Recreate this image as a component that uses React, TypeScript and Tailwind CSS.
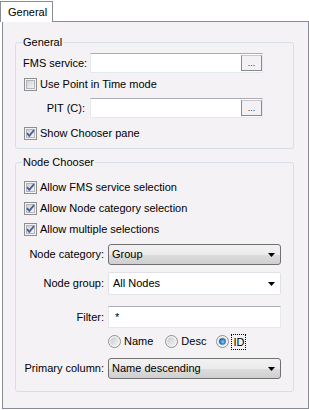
import React from "react";

function CheckBox({ checked }: { checked?: boolean }) {
  return (
    <svg width="13" height="13" viewBox="0 0 13 13" className="shrink-0">
      <defs>
        <linearGradient id="cbfill" x1="0" y1="0" x2="1" y2="1">
          <stop offset="0" stopColor="#cbcfd5" />
          <stop offset="1" stopColor="#f7f7f7" />
        </linearGradient>
      </defs>
      <rect x="0.5" y="0.5" width="12" height="12" fill="#f4f4f4" stroke="#8e8f8f" />
      <rect x="2.5" y="2.5" width="8" height="8" fill="url(#cbfill)" stroke="#b1b5bb" />
      {checked && (
        <path d="M3 6.2 L5.3 8.8 L10 3.2" fill="none" stroke="#4a5f97" strokeWidth="1.8" />
      )}
    </svg>
  );
}

function Radio({ checked }: { checked?: boolean }) {
  return (
    <svg width="13" height="13" viewBox="0 0 13 13" className="shrink-0">
      <defs>
        <linearGradient id="rdfill" x1="0" y1="0" x2="1" y2="1">
          <stop offset="0" stopColor="#c6cad0" />
          <stop offset="1" stopColor="#f4f4f4" />
        </linearGradient>
        <radialGradient id="rddot" cx="0.55" cy="0.55" r="0.6">
          <stop offset="0" stopColor="#8fd3ff" />
          <stop offset="0.6" stopColor="#2a7fc9" />
          <stop offset="1" stopColor="#0d3f74" />
        </radialGradient>
      </defs>
      <circle cx="6.5" cy="6.5" r="6" fill="#f4f4f4" stroke="#8e8f8f" />
      <circle cx="6.5" cy="6.5" r="4.3" fill="url(#rdfill)" />
      {checked && <circle cx="6.5" cy="6.5" r="3.3" fill="url(#rddot)" />}
    </svg>
  );
}

function Arrow() {
  return (
    <svg width="7" height="4" viewBox="0 0 7 4" className="shrink-0">
      <path d="M0 0 H7 L3.5 4 Z" fill="#000" />
    </svg>
  );
}

function CheckRow({ label, checked }: { label: string; checked?: boolean }) {
  return (
    <div className="flex h-[13px] items-center gap-[3px] pl-[8px]">
      <CheckBox checked={checked} />
      <span className="whitespace-nowrap leading-none">{label}</span>
    </div>
  );
}

function TextBox({ withButton, value }: { withButton?: boolean; value?: string }) {
  return (
    <div className="flex h-[20px] w-[173px] shrink-0 items-center border border-[#e3e9ef] border-t-[#abadb3] bg-white">
      <span className="flex-1 pl-[4px] leading-none">{value}</span>
      {withButton && (
        <div className="flex h-[16px] w-[21px] items-end justify-center border border-[#8a8a8a] border-t-[#c8c8c8] bg-[#f3f1f3] pb-[2px] text-[9px] leading-none text-[#402060]">
          ...
        </div>
      )}
    </div>
  );
}

function GroupBox({ title, className, children }: { title: string; className: string; children: React.ReactNode }) {
  return (
    <div className={`relative rounded-[3px] border border-[#d5dfe5] ${className}`}>
      <span className="absolute left-[6px] top-[-8px] bg-[#f5f2f5] px-[1px] leading-[14px]">{title}</span>
      {children}
    </div>
  );
}

export default function App() {
  return (
    <div className="h-[410px] w-[309px] bg-white font-['Liberation_Sans',Arial,sans-serif] text-[11px] text-black">
      <div className="relative z-10 -mb-px mt-[1px] flex h-[21px] w-[53px] items-center border border-b-0 border-[#898c95] bg-white pl-[7px]">
        General
      </div>
      <div className="ml-[2px] h-[388px] w-[307px] border border-[#898c95] bg-[#f5f2f5] pl-[12px] pr-[14px] pt-[20px]">
        <GroupBox title="General" className="h-[107px] pt-[10px]">
          <div className="flex items-center">
            <span className="w-[74px] shrink-0 whitespace-nowrap pl-[7px]">FMS service:</span>
            <TextBox withButton />
          </div>
          <div className="mt-[5px]">
            <CheckRow label="Use Point in Time mode" />
          </div>
          <div className="mt-[7px] flex items-center">
            <span className="w-[74px] shrink-0 whitespace-nowrap pr-[5px] text-right">PIT (C):</span>
            <TextBox withButton />
          </div>
          <div className="mt-[9px]">
            <CheckRow label="Show Chooser pane" checked />
          </div>
        </GroupBox>

        <GroupBox title="Node Chooser" className="mt-[13px] h-[230px] pt-[18px]">
          <div className="flex flex-col gap-[8px]">
            <CheckRow label="Allow FMS service selection" checked />
            <CheckRow label="Allow Node category selection" checked />
            <CheckRow label="Allow multiple selections" checked />
          </div>

          <div className="mt-[8px] flex items-center">
            <span className="w-[92px] shrink-0 whitespace-nowrap pr-[4px] text-right">Node category:</span>
            <div className="flex h-[21px] w-[173px] shrink-0 items-center justify-between rounded-[3px] border border-[#707070] bg-[linear-gradient(#f2f2f2_0%,#ebebeb_50%,#dddddd_50%,#cfcfcf_100%)] pl-[3px] pr-[5px]">
              <span>Group</span>
              <Arrow />
            </div>
          </div>

          <div className="mt-[7px] flex items-center">
            <span className="w-[92px] shrink-0 whitespace-nowrap pr-[4px] text-right">Node group:</span>
            <div className="flex h-[23px] w-[173px] shrink-0 items-center justify-between rounded-[2px] border border-[#dfe3e8] bg-white pl-[4px] pr-[5px]">
              <span>All Nodes</span>
              <Arrow />
            </div>
          </div>

          <div className="mt-[11px] flex items-center">
            <span className="w-[92px] shrink-0 whitespace-nowrap pr-[4px] text-right">Filter:</span>
            <div className="flex h-[22px] w-[173px] shrink-0 items-center border border-[#e3e9ef] border-t-[#abadb3] bg-white pl-[6px]">
              <span>*</span>
            </div>
          </div>

          <div className="mt-[7px] flex h-[13px] items-center pl-[92px]">
            <div className="flex items-center gap-[3px]">
              <Radio />
              <span>Name</span>
            </div>
            <div className="ml-[12px] flex items-center gap-[3px]">
              <Radio />
              <span>Desc</span>
            </div>
            <div className="ml-[10px] flex items-center gap-[2px]">
              <Radio checked />
              <span className="border border-dotted border-black px-[1px] leading-[14px]">ID</span>
            </div>
          </div>

          <div className="mt-[10px] flex items-center">
            <span className="w-[92px] shrink-0 whitespace-nowrap pr-[4px] text-right">Primary column:</span>
            <div className="flex h-[21px] w-[173px] shrink-0 items-center justify-between rounded-[3px] border border-[#707070] bg-[linear-gradient(#f2f2f2_0%,#ebebeb_50%,#dddddd_50%,#cfcfcf_100%)] pl-[3px] pr-[5px]">
              <span>Name descending</span>
              <Arrow />
            </div>
          </div>
        </GroupBox>
      </div>
    </div>
  );
}
